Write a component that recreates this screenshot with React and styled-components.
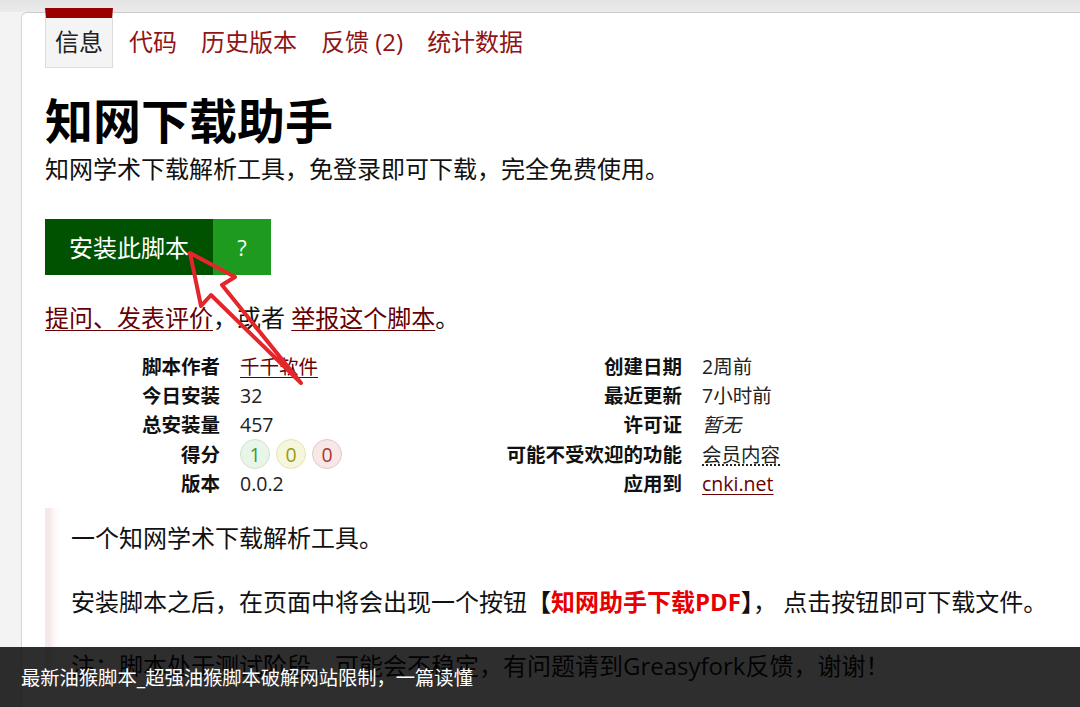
import React from "react";
import styled, { createGlobalStyle } from "styled-components";

const GlobalStyle = createGlobalStyle`
  html, body {
    margin: 0;
    padding: 0;
    overflow: hidden;
  }
  body {
    font-family: "Open Sans", "Noto Sans CJK SC", sans-serif;
    color: #222;
  }
`;

const Page = styled.div`
  position: relative;
  height: 100vh;
  overflow: hidden;
  background: linear-gradient(#e3e3e3 0, #ebebeb 12px, #f3f3f3 12px, #f3f3f3 100%);
  padding: 12px 0 0 21px;
  box-sizing: border-box;
`;

const Card = styled.main`
  background: #fff;
  border-top: 1px solid #cbcbcb;
  border-left: 1px solid #d6d6d6;
  border-top-left-radius: 6px;
  padding: 0 0 0 23px;
  min-height: 100%;
  box-sizing: border-box;
`;

const TabBar = styled.nav`
  display: flex;
  margin-top: -5px;
`;

const Tab = styled.a`
  display: flex;
  align-items: center;
  height: 60px;
  box-sizing: border-box;
  padding: ${(p) => (p.$active ? "0 9px 4px" : "0 12px 4px")};
  margin-right: ${(p) => (p.$active ? "4px" : "0")};
  font-size: 24px;
  text-decoration: none;
  border-style: solid;
  border-width: ${(p) => (p.$active ? "10px 1px 1px" : "10px 0 1px")};
  color: ${(p) => (p.$active ? "#222" : "#8f1515")};
  background: ${(p) => (p.$active ? "#f4f4f4" : "transparent")};
  border-color: ${(p) => (p.$active ? "#dcdcdc" : "transparent")};
  border-top-color: ${(p) => (p.$active ? "#990000" : "transparent")};
`;

const Title = styled.h2`
  margin: 24px 0 0;
  font-size: 48px;
  line-height: 57.6px;
  font-weight: 700;
  color: #000;
`;

const Subtitle = styled.p`
  margin: 2px 0 0;
  font-size: 24px;
  line-height: 33px;
  color: #111;
`;

const InstallRow = styled.div`
  display: flex;
  margin-top: 34px;
  height: 56px;
`;

const InstallButton = styled.a`
  display: flex;
  align-items: center;
  justify-content: center;
  width: 168px;
  background: #005200;
  color: #fff;
  font-size: 24px;
  text-decoration: none;
`;

const HelpButton = styled.a`
  display: flex;
  align-items: center;
  justify-content: center;
  width: 58px;
  background: #1e9a1e;
  color: #f2fff2;
  font-size: 22px;
  text-decoration: none;
`;

const Feedback = styled.p`
  margin: 26px 0 0;
  font-size: 24px;
  line-height: 33px;
  color: #111;
`;

const Link = styled.a`
  color: #670000;
  text-decoration: underline;
  text-underline-offset: 3px;
  text-decoration-thickness: 1px;
`;

const MetaGrid = styled.section`
  display: grid;
  grid-template-columns: 457px 1fr;
  margin-top: 18px;
  font-size: 19.5px;
  line-height: 29px;
`;

const MetaList = styled.dl`
  display: grid;
  grid-template-columns: ${(p) => p.$labelWidth}px 1fr;
  grid-auto-rows: 29.3px;
  align-items: center;
  column-gap: 20px;
  margin: 0;
  white-space: nowrap;
`;

const Label = styled.dt`
  font-weight: 700;
  text-align: right;
  color: #111;
`;

const Value = styled.dd`
  margin: 0;
  color: #222;
  font-style: ${(p) => (p.$italic ? "italic" : "normal")};
  text-decoration: ${(p) => (p.$dotted ? "underline dotted" : "none")};
  text-underline-offset: 3px;
`;

const Scores = styled.dd`
  margin: 0;
  display: flex;
  gap: 6px;
  align-items: center;
`;

const palette = {
  good: { bg: "#e8f5e8", border: "#cfe3cf", fg: "#3a9a3a" },
  ok: { bg: "#f6f6dc", border: "#e3e3bb", fg: "#9a9a18" },
  bad: { bg: "#f8e7e7", border: "#e4c8c8", fg: "#a83838" },
};

const Score = styled.span`
  display: inline-flex;
  align-items: center;
  justify-content: center;
  width: 30px;
  height: 30px;
  box-sizing: border-box;
  border-radius: 50%;
  border: 1px solid ${(p) => palette[p.$kind].border};
  background: ${(p) => palette[p.$kind].bg};
  color: ${(p) => palette[p.$kind].fg};
`;

const Description = styled.section`
  margin-top: 10px;
  padding: 13px 0 0 26px;
  background: linear-gradient(to right, #f6e6e8 0, #f7e9ea 5px, #fdf8f8 9px, #fff 16px);
  font-size: 24px;
  color: #111;

  p {
    margin: 0 0 31px;
    height: 33px;
    line-height: 33px;
    white-space: nowrap;
  }
`;

const Highlight = styled.strong`
  font-weight: 700;
  color: #111;
`;

const Red = styled.span`
  color: #e80000;
`;

const CaptionBar = styled.div`
  position: absolute;
  left: 0;
  right: 0;
  bottom: 0;
  height: 60px;
  display: flex;
  align-items: center;
  padding-left: 21px;
  background: rgba(0, 0, 0, 0.82);
  color: #fff;
  font-size: 19.3px;
`;

const ArrowLayer = styled.svg`
  position: absolute;
  left: 0;
  top: 0;
  pointer-events: none;
`;

function Arrow() {
  return (
    <ArrowLayer width="1080" height="707" viewBox="0 0 1080 707">
      <polygon
        points="190,253 235,277 222,285 301,383 211,295 201,306"
        fill="none"
        stroke="#e4252b"
        strokeWidth="4"
        strokeLinejoin="round"
      />
    </ArrowLayer>
  );
}

export default function App() {
  return (
    <>
      <GlobalStyle />
      <Page>
        <Card>
          <TabBar>
            <Tab $active>信息</Tab>
            <Tab>代码</Tab>
            <Tab>历史版本</Tab>
            <Tab>反馈 (2)</Tab>
            <Tab>统计数据</Tab>
          </TabBar>
          <Title>知网下载助手</Title>
          <Subtitle>知网学术下载解析工具，免登录即可下载，完全免费使用。</Subtitle>
          <InstallRow>
            <InstallButton>安装此脚本</InstallButton>
            <HelpButton>?</HelpButton>
          </InstallRow>
          <Feedback>
            <Link>提问、发表评价</Link>，或者 <Link>举报这个脚本</Link>。
          </Feedback>
          <MetaGrid>
            <MetaList $labelWidth={175}>
              <Label>脚本作者</Label>
              <Value>
                <Link>千千软件</Link>
              </Value>
              <Label>今日安装</Label>
              <Value>32</Value>
              <Label>总安装量</Label>
              <Value>457</Value>
              <Label>得分</Label>
              <Scores>
                <Score $kind="good">1</Score>
                <Score $kind="ok">0</Score>
                <Score $kind="bad">0</Score>
              </Scores>
              <Label>版本</Label>
              <Value>0.0.2</Value>
            </MetaList>
            <MetaList $labelWidth={180}>
              <Label>创建日期</Label>
              <Value>2周前</Value>
              <Label>最近更新</Label>
              <Value>7小时前</Value>
              <Label>许可证</Label>
              <Value $italic>暂无</Value>
              <Label>可能不受欢迎的功能</Label>
              <Value $dotted>会员内容</Value>
              <Label>应用到</Label>
              <Value>
                <Link>cnki.net</Link>
              </Value>
            </MetaList>
          </MetaGrid>
          <Description>
            <p>一个知网学术下载解析工具。</p>
            <p>
              安装脚本之后，在页面中将会出现一个按钮
              <Highlight>
                【<Red>知网助手下载PDF</Red>】
              </Highlight>
              ， 点击按钮即可下载文件。
            </p>
            <p>注：脚本处于测试阶段，可能会不稳定，有问题请到Greasyfork反馈，谢谢！</p>
          </Description>
        </Card>
        <Arrow />
        <CaptionBar>最新油猴脚本_超强油猴脚本破解网站限制，一篇读懂</CaptionBar>
      </Page>
    </>
  );
}
